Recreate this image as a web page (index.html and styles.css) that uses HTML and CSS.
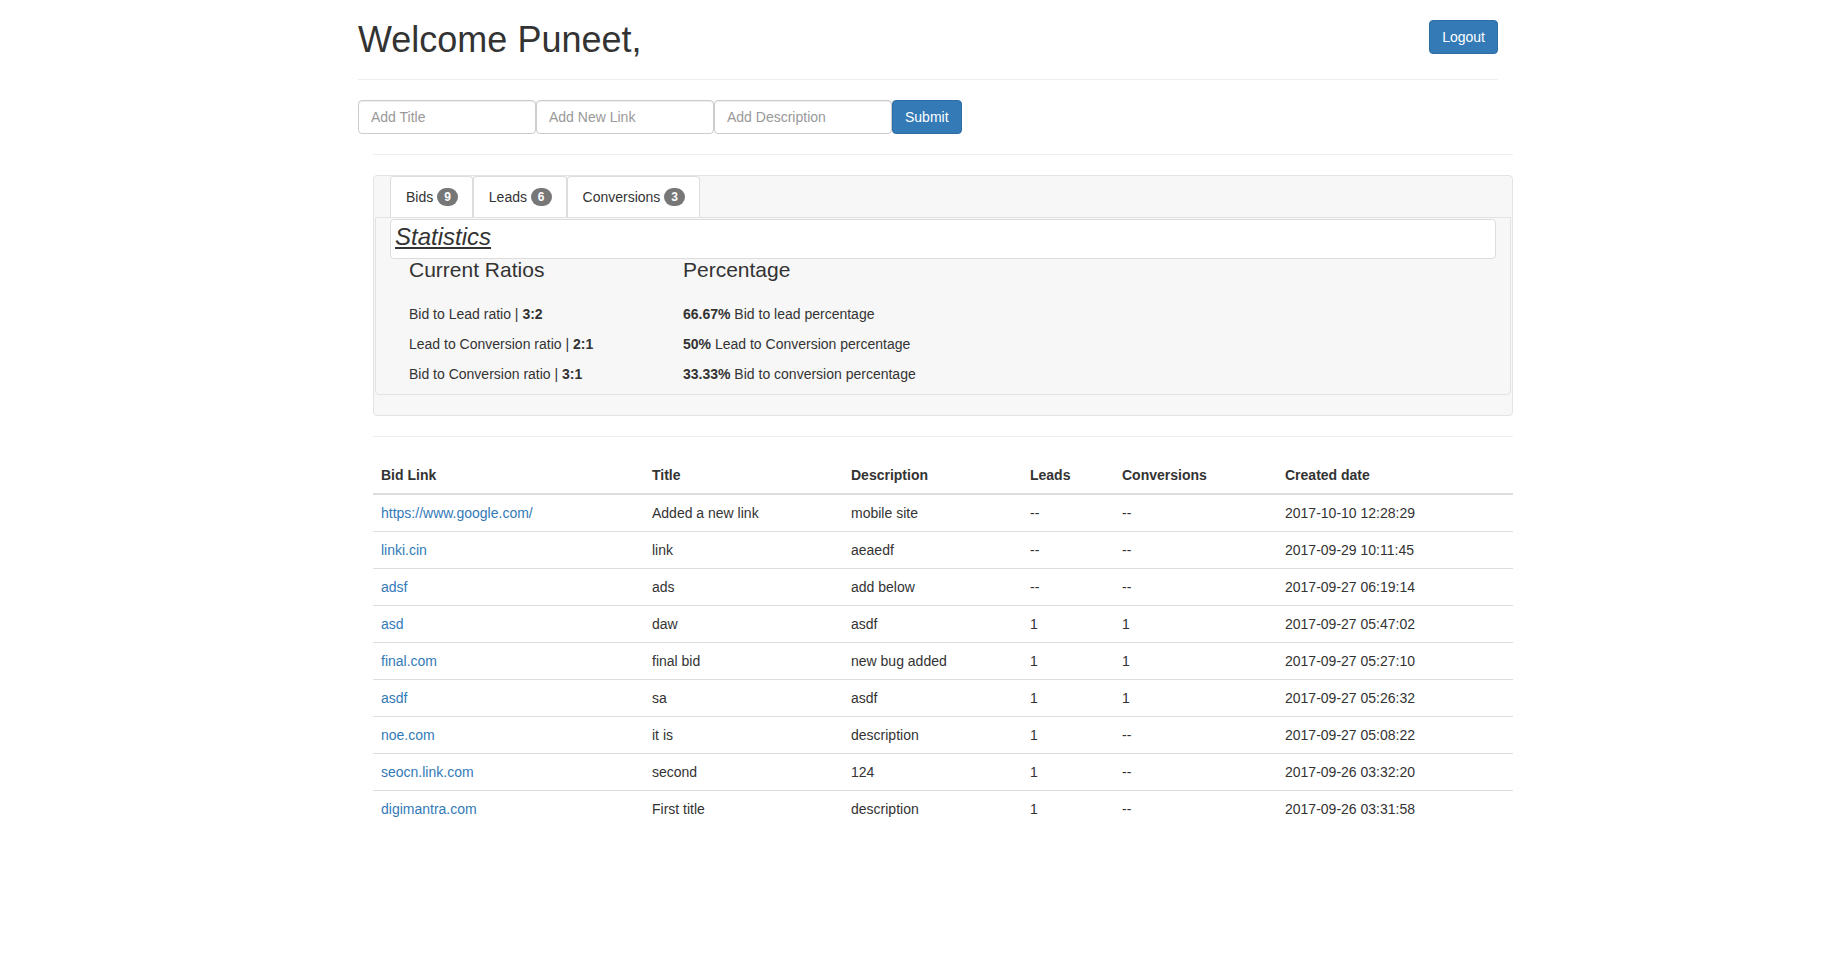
FILE: index.html
```html
<!DOCTYPE html>
<html lang="en">
<head>
<meta charset="utf-8">
<title>Dashboard</title>
<link rel="stylesheet" href="styles.css">
</head>
<body>
<div class="container">
  <header class="page-head">
    <h1 class="welcome">Welcome Puneet,</h1>
    <button class="btn btn-primary" type="button">Logout</button>
  </header>
  <hr class="rule">
  <form class="add-form">
    <input class="form-control" type="text" placeholder="Add Title">
    <input class="form-control" type="text" placeholder="Add New Link">
    <input class="form-control" type="text" placeholder="Add Description">
    <button class="btn btn-primary" type="button">Submit</button>
  </form>

  <div class="inner">
    <hr class="rule">
    <div class="stats-panel">
      <ul class="tabs">
        <li class="tab">Bids <span class="badge">9</span></li>
        <li class="tab">Leads <span class="badge">6</span></li>
        <li class="tab">Conversions <span class="badge">3</span></li>
      </ul>
      <div class="tab-content">
        <div class="stats-title"><span>Statistics</span></div>
        <div class="ratios">
          <div class="ratio-col">
            <h4 class="ratio-head">Current Ratios</h4>
            <p>Bid to Lead ratio | <b>3:2</b></p>
            <p>Lead to Conversion ratio | <b>2:1</b></p>
            <p>Bid to Conversion ratio | <b>3:1</b></p>
          </div>
          <div class="ratio-col">
            <h4 class="ratio-head">Percentage</h4>
            <p><b>66.67%</b> Bid to lead percentage</p>
            <p><b>50%</b> Lead to Conversion percentage</p>
            <p><b>33.33%</b> Bid to conversion percentage</p>
          </div>
        </div>
      </div>
    </div>
    <hr class="rule">
    <table class="table">
      <colgroup>
        <col class="c-link"><col class="c-title"><col class="c-desc"><col class="c-leads"><col class="c-conv"><col class="c-date">
      </colgroup>
      <thead>
        <tr><th>Bid Link</th><th>Title</th><th>Description</th><th>Leads</th><th>Conversions</th><th>Created date</th></tr>
      </thead>
      <tbody>
        <tr><td><a href="#">https://www.google.com/</a></td><td>Added a new link</td><td>mobile site</td><td>--</td><td>--</td><td>2017-10-10 12:28:29</td></tr>
        <tr><td><a href="#">linki.cin</a></td><td>link</td><td>aeaedf</td><td>--</td><td>--</td><td>2017-09-29 10:11:45</td></tr>
        <tr><td><a href="#">adsf</a></td><td>ads</td><td>add below</td><td>--</td><td>--</td><td>2017-09-27 06:19:14</td></tr>
        <tr><td><a href="#">asd</a></td><td>daw</td><td>asdf</td><td>1</td><td>1</td><td>2017-09-27 05:47:02</td></tr>
        <tr><td><a href="#">final.com</a></td><td>final bid</td><td>new bug added</td><td>1</td><td>1</td><td>2017-09-27 05:27:10</td></tr>
        <tr><td><a href="#">asdf</a></td><td>sa</td><td>asdf</td><td>1</td><td>1</td><td>2017-09-27 05:26:32</td></tr>
        <tr><td><a href="#">noe.com</a></td><td>it is</td><td>description</td><td>1</td><td>--</td><td>2017-09-27 05:08:22</td></tr>
        <tr><td><a href="#">seocn.link.com</a></td><td>second</td><td>124</td><td>1</td><td>--</td><td>2017-09-26 03:32:20</td></tr>
        <tr><td><a href="#">digimantra.com</a></td><td>First title</td><td>description</td><td>1</td><td>--</td><td>2017-09-26 03:31:58</td></tr>
      </tbody>
    </table>
  </div>
</div>
</body>
</html>
```
FILE: styles.css
```css
* { box-sizing: border-box; }
html, body { background: #fff; }
body {
  margin: 0;
  padding-left: 16px;
  font-family: "Liberation Sans", Arial, Helvetica, sans-serif;
  font-size: 14px;
  line-height: 20px;
  color: #333;
}
.container { width: 1140px; margin: 0 auto; }
.page-head { display: flex; justify-content: space-between; align-items: flex-start; }
.welcome {
  margin: 20px 0 0;
  font-size: 36px;
  font-weight: 500;
  line-height: 39px;
  color: #333;
}
.btn {
  font-family: inherit;
  font-size: 14px;
  line-height: 20px;
  padding: 6px 12px;
  border-radius: 4px;
  border: 1px solid transparent;
  cursor: pointer;
}
.btn-primary { background: #337ab7; border-color: #2e6da4; color: #fff; }
.page-head .btn { margin-top: 20px; }
.rule { margin: 20px 0; border: 0; border-top: 1px solid #eee; height: 0; }
.add-form { display: flex; }
.form-control {
  width: 178px;
  height: 34px;
  padding: 6px 12px;
  font-family: inherit;
  font-size: 14px;
  color: #555;
  background: #fff;
  border: 1px solid #ccc;
  border-radius: 4px;
  box-shadow: inset 0 1px 1px rgba(0,0,0,.075);
}
.form-control::placeholder { color: #999; }
.add-form .btn { height: 34px; }
.inner { margin: 0 -15px 0 15px; }
.stats-panel {
  background: #f7f7f7;
  border: 1px solid #e3e3e3;
  border-radius: 4px;
  padding: 0 1px 20px;
  margin-bottom: 20px;
}
.tabs { list-style: none; margin: 0; padding: 0 0 0 15px; display: flex; }
.tab {
  height: 41px;
  padding: 10px 14px 10px 15px;
  background: #fff;
  border: 1px solid #ddd;
  border-bottom: 0;
  border-radius: 4px 4px 0 0;
  color: #333;
}
.badge {
  display: inline-block;
  min-width: 10px;
  padding: 3px 7px;
  font-size: 12px;
  font-weight: bold;
  line-height: 1;
  color: #fff;
  background: #777;
  border-radius: 10px;
  vertical-align: middle;
  position: relative;
  top: -1px;
  text-align: center;
}
.tab-content {
  border: 1px solid #e3e3e3;
  border-radius: 0 0 4px 4px;
  padding: 0 14px;
}
.stats-title {
  margin-top: 1px;
  height: 40px;
  background: #fff;
  border: 1px solid #ddd;
  border-radius: 4px;
  padding: 0 4px;
}
.stats-title span {
  font-size: 24px;
  font-style: italic;
  text-decoration: underline;
  line-height: 33px;
  color: #333;
}
.ratios { display: grid; grid-template-columns: 274px 1fr; padding-left: 19px; }
.ratio-head { margin: -1px 0 23px; font-size: 21px; font-weight: 500; line-height: 23px; }
.ratio-col p { margin: 0 0 10px; }
.table { width: 100%; border-collapse: collapse; table-layout: fixed; border-spacing: 0; }
.c-link { width: 271px; }
.c-title { width: 199px; }
.c-desc { width: 179px; }
.c-leads { width: 92px; }
.c-conv { width: 163px; }
.c-date { width: 236px; }
.table th, .table td { padding: 8px; line-height: 20px; text-align: left; vertical-align: top; }
.table th { font-weight: bold; border-bottom: 2px solid #ddd; }
.table td { border-top: 1px solid #ddd; }
.table a { color: #337ab7; text-decoration: none; }
```
